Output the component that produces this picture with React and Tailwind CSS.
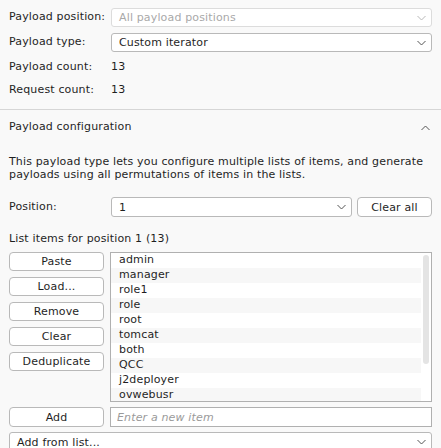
import React, { useState } from "react";

// only the rows that fit in the box are drawn
const items = ["admin", "manager", "role1", "role", "root", "tomcat", "both", "QCC", "j2deployer", "ovwebusr"];

const Chevron = ({ up = false, light = false }) => (
  <svg width="9" height="6" viewBox="0 0 9 6" className={light ? "text-[#b8b8b8]" : "text-[#555]"}>
    <path
      d={up ? "M0.5 5 L4.5 1 L8.5 5" : "M0.5 1 L4.5 5 L8.5 1"}
      fill="none"
      stroke="currentColor"
      strokeWidth="1"
    />
  </svg>
);

const Select = ({ value, disabled, className = "" }) => (
  <div
    className={`flex items-center justify-between h-[19px] pl-[7px] pr-[5px] bg-white rounded-[3px] border ${
      disabled ? "border-[#dcdcdc] text-[#a9a9a9]" : "border-[#b9b9b9] text-[#1f1f1f]"
    } ${className}`}
  >
    <span className="leading-none">{value}</span>
    <Chevron light={disabled} />
  </div>
);

const Btn = ({ children, className = "" }) => (
  <button className={`h-[19px] w-[95px] bg-white border border-[#b9b9b9] rounded-[4px] text-[#1f1f1f] leading-none tracking-[0.15px] ${className}`}>
    {children}
  </button>
);

const App = () => {
  const [newItem, setNewItem] = useState("");

  return (
    <div
      className="w-[441px] h-[448px] overflow-hidden bg-[#f9f9f9] text-[#1f1f1f] text-[11px] tracking-[0.15px]"
      style={{ fontFamily: "'DejaVu Sans', Verdana, sans-serif" }}
    >
      {/* top settings */}
      <div className="px-[9px] pt-[8px]">
        <div className="flex items-center">
          <span className="w-[102px]">Payload position:</span>
          <Select value="All payload positions" disabled className="flex-1" />
        </div>
        <div className="flex items-center mt-[6px]">
          <span className="w-[102px]">Payload type:</span>
          <Select value="Custom iterator" className="flex-1" />
        </div>
        <div className="flex items-center h-[15px] mt-[8px]">
          <span className="w-[102px]">Payload count:</span>
          <span>13</span>
        </div>
        <div className="flex items-center h-[15px] mt-[8px]">
          <span className="w-[102px]">Request count:</span>
          <span>13</span>
        </div>
      </div>

      <div className="h-px bg-[#d6d6d6] mt-[11px]"></div>

      {/* Payload configuration */}
      <div className="px-[9px]">
        <div className="flex items-center justify-between h-[15px] mt-[10px] pr-[2px]">
          <span>Payload configuration</span>
          <Chevron up />
        </div>

        <p className="mt-[20px] leading-[13px]">
          This payload type lets you configure multiple lists of items, and generate payloads using all permutations of items in the lists.
        </p>

        <div className="flex items-center mt-[16px]">
          <span className="w-[102px]">Position:</span>
          <Select value="1" className="w-[241px] h-[20px]" />
          <button className="ml-[5px] h-[20px] flex-1 bg-white border border-[#b9b9b9] rounded-[4px] leading-none tracking-[0.15px]">
            Clear all
          </button>
        </div>

        <div className="h-[15px] mt-[15px] flex items-center">List items for position 1 (13)</div>

        <div className="flex mt-[5px] gap-[6px]">
          <div className="flex flex-col gap-[6px]">
            <Btn>Paste</Btn>
            <Btn>Load...</Btn>
            <Btn>Remove</Btn>
            <Btn>Clear</Btn>
            <Btn>Deduplicate</Btn>
          </div>
          <div className="relative flex-1 h-[150px] bg-white border border-[#b0b0b0] overflow-hidden">
            <div className="pr-[10px]">
              {items.map((it, i) => (
                <div
                  key={it}
                  className={`h-[15px] pl-[8px] flex items-center ${i % 2 === 1 ? "bg-[#f7f7f7]" : "bg-white"}`}
                >
                  {it}
                </div>
              ))}
            </div>
            <div className="absolute right-[2px] top-[2px] w-[6px] h-[109px] rounded-full bg-[#e4e4e4]"></div>
          </div>
        </div>

        <div className="flex mt-[5px] gap-[6px]">
          <Btn className="h-[20px]">Add</Btn>
          <input
            value={newItem}
            onChange={(e) => setNewItem(e.target.value)}
            placeholder="Enter a new item"
            className="flex-1 h-[20px] px-[6px] bg-white border border-[#b0b0b0] outline-none placeholder:italic placeholder:text-[#9a9a9a]"
          />
        </div>

        <Select value="Add from list..." className="mt-[5px] h-[20px] pl-[6px]" />
      </div>
    </div>
  );
};

export default App;
